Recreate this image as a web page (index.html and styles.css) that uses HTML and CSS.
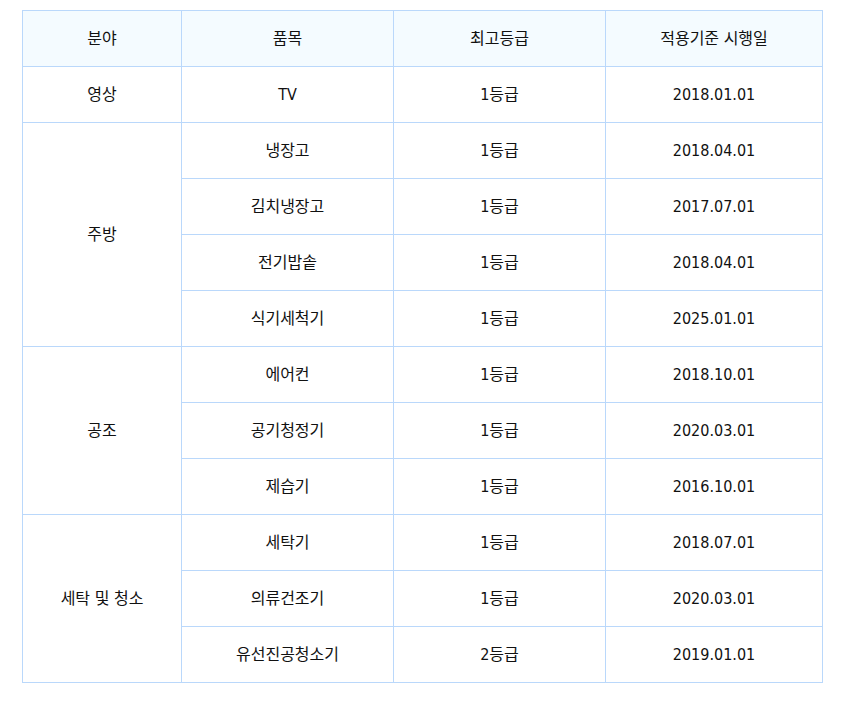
FILE: index.html
```html
<!DOCTYPE html>
<html lang="ko">
<head>
<meta charset="utf-8">
<link rel="stylesheet" href="styles.css">
</head>
<body>
<table class="grade-table">
  <colgroup>
    <col class="c1"><col class="c2"><col class="c3"><col class="c4">
  </colgroup>
  <thead>
    <tr><th>분야</th><th>품목</th><th>최고등급</th><th>적용기준 시행일</th></tr>
  </thead>
  <tbody>
    <tr><td>영상</td><td>TV</td><td>1등급</td><td>2018.01.01</td></tr>
    <tr><td rowspan="4">주방</td><td>냉장고</td><td>1등급</td><td>2018.04.01</td></tr>
    <tr><td>김치냉장고</td><td>1등급</td><td>2017.07.01</td></tr>
    <tr><td>전기밥솥</td><td>1등급</td><td>2018.04.01</td></tr>
    <tr><td>식기세척기</td><td>1등급</td><td>2025.01.01</td></tr>
    <tr><td rowspan="3">공조</td><td>에어컨</td><td>1등급</td><td>2018.10.01</td></tr>
    <tr><td>공기청정기</td><td>1등급</td><td>2020.03.01</td></tr>
    <tr><td>제습기</td><td>1등급</td><td>2016.10.01</td></tr>
    <tr><td rowspan="3">세탁 및 청소</td><td>세탁기</td><td>1등급</td><td>2018.07.01</td></tr>
    <tr><td>의류건조기</td><td>1등급</td><td>2020.03.01</td></tr>
    <tr><td>유선진공청소기</td><td>2등급</td><td>2019.01.01</td></tr>
  </tbody>
</table>
</body>
</html>
```
FILE: styles.css
```css
body {
  margin: 0;
  padding: 10px 20px 0 22px;
  background: #fff;
  font-family: "DejaVu Sans Condensed", "Noto Sans CJK KR", sans-serif;
  color: #111;
}
.grade-table {
  border-collapse: collapse;
  width: 800px;
  table-layout: fixed;
  font-size: 16px;
}
.c1 { width: 159px; }
.c2 { width: 212px; }
.c3 { width: 212px; }
.c4 { width: 217px; }
.grade-table th,
.grade-table td {
  border: 1px solid #bad8fb;
  height: 55px;
  padding: 0;
  text-align: center;
  vertical-align: middle;
  font-weight: normal;
  line-height: 20px;
}
.grade-table th {
  background: #f4fbff;
}
```
